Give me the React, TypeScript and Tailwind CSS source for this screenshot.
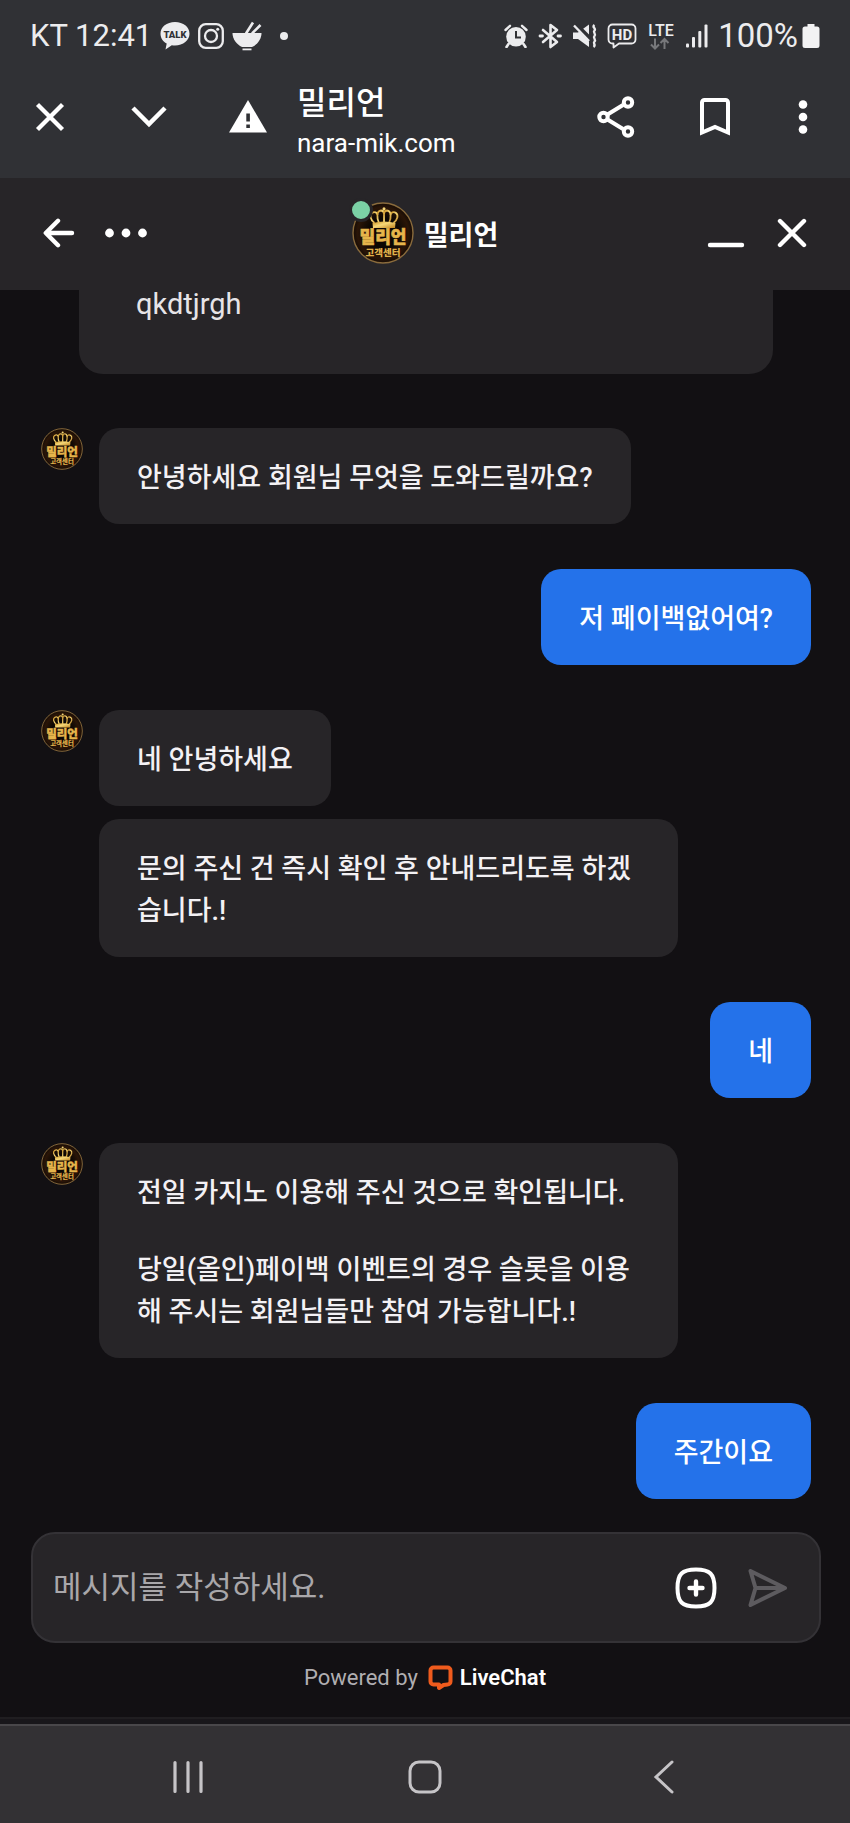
import { useState } from 'react'

interface Message {
  from: 'agent' | 'me'
  // each bubble is a list of paragraphs
  bubbles: string[][]
}

const messages: Message[] = [
  { from: 'agent', bubbles: [['안녕하세요 회원님 무엇을 도와드릴까요?']] },
  { from: 'me', bubbles: [['저 페이백없어여?']] },
  { from: 'agent', bubbles: [['네 안녕하세요'], ['문의 주신 건 즉시 확인 후 안내드리도록 하겠습니다.!']] },
  { from: 'me', bubbles: [['네']] },
  {
    from: 'agent',
    bubbles: [['전일 카지노 이용해 주신 것으로 확인됩니다.', '당일(올인)페이백 이벤트의 경우 슬롯을 이용해 주시는 회원님들만 참여 가능합니다.!']],
  },
  { from: 'me', bubbles: [['주간이요']] },
]

function Avatar({ className }: { className: string }) {
  return (
    <svg viewBox="0 0 62 62" className={className} role="img" aria-label="밀리언 고객센터">
      <defs>
        <linearGradient id="gold" x1="0" y1="0" x2="1" y2="1">
          <stop offset="0" stopColor="#c98f22" />
          <stop offset="0.45" stopColor="#f6d878" />
          <stop offset="1" stopColor="#c08420" />
        </linearGradient>
        <radialGradient id="disc" cx="0.5" cy="0.5" r="0.5">
          <stop offset="0.5" stopColor="#0c0703" />
          <stop offset="0.85" stopColor="#2a1507" />
          <stop offset="1" stopColor="#150b05" />
        </radialGradient>
      </defs>
      <circle cx="31" cy="31" r="30" fill="url(#disc)" stroke="#8a6b3c" strokeWidth="1.4" />
      <g fill="none" stroke="url(#gold)" strokeWidth="1.800" strokeLinejoin="round">
        <path d="M22.500 21C18 17.500 17.500 13 20 11C22.500 9.200 25.500 10.500 25.500 13" />
        <path d="M41.500 21C46 17.500 46.500 13 44 11C41.500 9.200 38.500 10.500 38.500 13" />
        <path d="M27 21C24.500 15.500 24.500 9 29 8.500C31.500 8.500 32 10 32 12" />
        <path d="M37 21C39.500 15.500 39.500 9 35 8.500C32.500 8.500 32 10 32 12V21" />
      </g>
      <path d="M20.500 21Q32 17.800 43.500 21L43 26H21Z" fill="url(#gold)" />
      <circle cx="32" cy="6.800" r="1.500" fill="#f6d878" />
      <text x="31" y="41" textAnchor="middle" fontSize="17" fontWeight="900" fill="#e6b54b" stroke="#e6b54b" strokeWidth="0.6" className="font-['Noto_Sans_CJK_KR',sans-serif]">
        밀리언
      </text>
      <text x="31" y="53.500" textAnchor="middle" fontSize="9.500" fontWeight="900" fill="#e0b04a" className="font-['Noto_Sans_CJK_KR',sans-serif]">
        고객센터
      </text>
    </svg>
  )
}

function StatusBar() {
  return (
    <div className="flex h-[72px] items-center justify-between pl-[30px] pr-[30px] leading-[36px] text-[#ececee]">
      <div className="flex items-center gap-2">
        <span className="whitespace-nowrap text-[31px]">KT 12:41</span>
        <svg width="30" height="28" viewBox="0 0 30 28" aria-hidden="true">
          <path d="M15 0C6.700 0 .5 5 .5 11.700c0 4.300 2.400 7.800 6.200 9.900L5.500 27.500l6.300-4.300c1 .1 2.100.2 3.200.2 8.300 0 14.500-5.100 14.500-11.700S23.300 0 15 0Z" fill="#ececee" />
          <text x="15" y="15.500" textAnchor="middle" fontSize="9.500" fontWeight="900" fill="#303135">TALK</text>
        </svg>
        <svg width="26" height="26" viewBox="0 0 26 26" fill="none" stroke="#ececee" strokeWidth="2.300" aria-hidden="true">
          <rect x="1.200" y="1.200" width="23.600" height="23.600" rx="6.500" />
          <circle cx="13" cy="13" r="6" />
          <circle cx="19.700" cy="6.300" r="1.500" fill="#ececee" stroke="none" />
        </svg>
        <svg width="30" height="30" viewBox="0 0 30 30" fill="#ececee" aria-hidden="true">
          <path d="M.5 12h29c0 6-4 11.500-9.500 14H10C4.500 23.500.5 18 .5 12Z" />
          <path d="M10.500 27.500h9v1.800h-9Z" />
          <path d="M14 12.500 21 1.500M20 12.500 28.500 4" stroke="#ececee" strokeWidth="2.600" fill="none" />
        </svg>
        <span className="ml-[10px] size-2 rounded-full bg-[#ececee]" />
      </div>

      <div className="flex items-center gap-[9px]">
        <svg width="24" height="24" viewBox="0 0 24 24" fill="none" stroke="#ececee" aria-hidden="true">
          <circle cx="12" cy="12.800" r="9.800" fill="#ececee" stroke="none" />
          <path d="M1.500 6 6 1.800M22.500 6 18 1.800" strokeWidth="2.400" strokeLinecap="round" />
          <path d="m4.500 20-2 3M19.500 20l2 3" strokeWidth="2.600" strokeLinecap="round" />
          <path d="M12 7v6.500h5" stroke="#303135" strokeWidth="2" />
        </svg>
        <svg width="26" height="26" viewBox="0 0 26 26" fill="none" stroke="#ececee" strokeWidth="2.600" strokeLinejoin="round" strokeLinecap="round" aria-hidden="true">
          <path d="m6 7 14 12-6.500 5V2L20 7 6 19" />
          <path d="M3 13h2.500M21 13h2.500" strokeWidth="2.800" />
        </svg>
        <svg width="26" height="24" viewBox="0 0 26 24" fill="#ececee" aria-hidden="true">
          <path d="M1 8.500h5l11-8v22.500l-11-8H1Z" />
          <path d="m3 0 16 16" stroke="#303135" strokeWidth="5" />
          <path d="m2 1.500 15 15.500" stroke="#ececee" strokeWidth="2.400" />
          <path d="M22.500 1c-3 2 2 3.500 0 5.500s2 3.500 0 5.500 2 3.500 0 5.500 2 3.500-1 5.500" fill="none" stroke="#ececee" strokeWidth="2.400" />
        </svg>
        <svg width="30" height="26" viewBox="0 0 30 26" fill="none" stroke="#ececee" strokeWidth="1.800" aria-hidden="true">
          <path d="M5.500 1.500h19a4 4 0 0 1 4 4v11a4 4 0 0 1-4 4H12l-5.500 4v-4h-1a4 4 0 0 1-4-4v-11a4 4 0 0 1 4-4Z" strokeLinejoin="round" />
          <text x="15" y="16.500" textAnchor="middle" fontSize="15" fontWeight="700" fill="#ececee" stroke="none">HD</text>
        </svg>
        <svg width="30" height="32" viewBox="0 0 30 32" aria-hidden="true">
          <text x="15" y="16" textAnchor="middle" fontSize="16" fontWeight="500" fill="#ececee">LTE</text>
          <path d="M9 18.500v10M5 24.500l4 4 4-4M18.500 29V19M14.500 23l4-4 4 4" fill="none" stroke="#77787b" strokeWidth="2" />
        </svg>
        <svg width="24" height="24" viewBox="0 0 24 24" fill="#ececee" aria-hidden="true">
          <rect x="1" y="19.500" width="3" height="4" rx="1" />
          <rect x="7" y="13" width="3" height="10.500" rx="1" />
          <rect x="13.300" y="7" width="3" height="16.500" rx="1" />
          <rect x="19.500" y="0.500" width="3" height="23" rx="1" />
        </svg>
        <div className="flex items-center gap-1">
          <span className="text-[33px]">100%</span>
          <svg width="18" height="24" viewBox="0 0 18 24" fill="#f2f2f3" aria-hidden="true">
            <path d="M5.500 0h7v2.500H15A2.500 2.500 0 0 1 17.500 5v16.500A2.500 2.500 0 0 1 15 24H3A2.500 2.500 0 0 1 .5 21.500V5A2.500 2.500 0 0 1 3 2.500h2.500Z" />
          </svg>
        </div>
      </div>
    </div>
  )
}

function BrowserBar() {
  return (
    <div className="flex h-[106px] items-center justify-between pb-4 pl-[35px] pr-[38px] text-white">
      <div className="flex items-center gap-[65px]">
        <button type="button" aria-label="탭 닫기">
          <svg width="30" height="30" viewBox="0 0 30 30" fill="none" stroke="currentColor" strokeWidth="4.300">
            <path d="m2.500 2.500 25 25M27.500 2.500l-25 25" />
          </svg>
        </button>
        <button type="button" aria-label="최소화">
          <svg width="38" height="24" viewBox="0 0 38 24" fill="none" stroke="currentColor" strokeWidth="4.500">
            <path d="m3 3 16 16L35 3" />
          </svg>
        </button>
        <div className="-ml-1 flex items-center gap-[30px]">
          <button type="button" aria-label="사이트 정보">
            <svg width="38" height="34" viewBox="0 0 38 34" fill="currentColor">
              <path d="M19 0 38 32.500H0Z" />
              <path d="M17.300 13.500h3.600v8h-3.600ZM17.300 24.500h3.600v3.500h-3.600Z" fill="#303135" />
            </svg>
          </button>
          <div className="pt-3">
            <p className="text-[32px] font-medium leading-[40px]">밀리언</p>
            <p className="text-[26px] leading-[40px]">nara-mik.com</p>
          </div>
        </div>
      </div>
      <div className="flex items-center gap-16">
        <button type="button" aria-label="공유">
          <svg width="40" height="42" viewBox="0 0 40 42" fill="none" stroke="currentColor" strokeWidth="4">
            <path d="M11.500 18.500 27 9M11.500 23.500 27 33" />
            <circle cx="7.500" cy="21" r="4.200" />
            <circle cx="32" cy="6.500" r="4.200" />
            <circle cx="32" cy="35.500" r="4.200" />
          </svg>
        </button>
        <button type="button" aria-label="북마크">
          <svg width="30" height="38" viewBox="0 0 30 38" fill="none" stroke="currentColor" strokeWidth="4">
            <path d="M2 34.500V4.500A2.500 2.500 0 0 1 4.500 2h21A2.500 2.500 0 0 1 28 4.500v30L15 29Z" />
          </svg>
        </button>
        <button type="button" aria-label="더보기">
          <svg width="18" height="34" viewBox="0 0 18 34" fill="currentColor">
            <circle cx="9" cy="4.500" r="4.300" />
            <circle cx="9" cy="17" r="4.300" />
            <circle cx="9" cy="29.500" r="4.300" />
          </svg>
        </button>
      </div>
    </div>
  )
}

function ChatHeader() {
  return (
    <header className="grid h-28 grid-cols-[1fr_auto_1fr] items-center bg-[#272528] pb-[2px] pl-[43px] pr-[43px] text-white">
      <div className="flex items-center gap-7">
        <button type="button" aria-label="뒤로">
          <svg width="32" height="30" viewBox="0 0 32 30" fill="none" stroke="currentColor" strokeWidth="4.400" strokeLinecap="round" strokeLinejoin="round">
            <path d="M29 15H3M15 2.800 2.800 15 15 27.200" />
          </svg>
        </button>
        <button type="button" aria-label="메뉴">
          <svg width="46" height="10" viewBox="0 0 46 10" fill="currentColor">
            <circle cx="6.500" cy="5" r="4.400" />
            <circle cx="23" cy="5" r="4.400" />
            <circle cx="39.500" cy="5" r="4.400" />
          </svg>
        </button>
      </div>
      <div className="flex items-center gap-[10px]">
        <div className="relative">
          <Avatar className="size-[62px]" />
          <span className="absolute -left-[3px] -top-1 size-6 rounded-full border-3 border-[#272528] bg-[#7bd1a5]" />
        </div>
        <h1 className="pt-[6px] text-[27px] font-bold leading-[36px]">밀리언</h1>
      </div>
      <div className="flex items-center justify-end gap-8">
        <button type="button" aria-label="창 내리기">
          <svg width="38" height="30" viewBox="0 0 38 30" fill="none" stroke="currentColor" strokeWidth="4.400" strokeLinecap="round">
            <path d="M3 27h32" />
          </svg>
        </button>
        <button type="button" aria-label="채팅 닫기">
          <svg width="30" height="30" viewBox="0 0 30 30" fill="none" stroke="currentColor" strokeWidth="4.400" strokeLinecap="round">
            <path d="m3 3 24 24M27 3 3 27" />
          </svg>
        </button>
      </div>
    </header>
  )
}

function MessageGroup({ message }: { message: Message }) {
  if (message.from === 'me') {
    return (
      <div className="flex flex-col items-end gap-[13px]">
        {message.bubbles.map((paragraphs, i) => (
          <div key={i} className="rounded-[20px] bg-[#2472ea] px-[38px] pb-[25px] pt-[29px] text-white">
            {paragraphs.map(p => <p key={p}>{p}</p>)}
          </div>
        ))}
      </div>
    )
  }

  return (
    <div className="flex items-start gap-4 pr-[133px]">
      <Avatar className="size-[42px] shrink-0" />
      <div className="flex flex-col items-start gap-[13px]">
        {message.bubbles.map((paragraphs, i) => (
          <div key={i} className="space-y-[35px] rounded-[20px] bg-[#272528] px-[38px] pb-[25px] pt-[29px] text-[#f3f1f4]">
            {paragraphs.map(p => <p key={p}>{p}</p>)}
          </div>
        ))}
      </div>
    </div>
  )
}

function Composer() {
  const [text, setText] = useState('')

  return (
    <form
      onSubmit={e => { e.preventDefault(); setText('') }}
      className="ml-[31px] mr-[29px] mt-[31px] flex h-[111px] items-center gap-7 rounded-3xl border-2 border-[#343236] bg-[#272528] pl-5 pr-[30px]"
    >
      <input
        value={text}
        onChange={e => setText(e.target.value)}
        aria-label="메시지"
        placeholder="메시지를 작성하세요."
        className="min-w-0 flex-1 bg-transparent text-[31px] leading-[44px] text-white outline-none placeholder:text-[#a9a7aa]"
      />
      <button type="button" aria-label="첨부" className="text-white">
        <svg width="42" height="42" viewBox="0 0 42 42" fill="none" stroke="currentColor" strokeWidth="4" strokeLinecap="round">
          <path d="M21 2.500c14 0 18.500 4.500 18.500 18.500S35 39.500 21 39.500 2.500 35 2.500 21 7 2.500 21 2.500Z" />
          <path d="M21 14.500v13M14.500 21h13" strokeWidth="4.400" />
        </svg>
      </button>
      <button type="submit" aria-label="보내기" className="text-[#5d5b5f]">
        <svg width="44" height="42" viewBox="0 0 44 42" fill="none" stroke="currentColor" strokeWidth="4" strokeLinecap="round" strokeLinejoin="round">
          <path d="m5.500 4 34.500 17L5.500 38l5-17ZM10.500 21H39" />
        </svg>
      </button>
    </form>
  )
}

function SystemNav() {
  return (
    <nav className="flex h-[99px] items-center justify-between border-t-2 border-[#49474a] bg-[#333134] px-[171px] pt-1 text-[#c6c4c7]">
      <button type="button" aria-label="최근 앱">
        <svg width="34" height="34" viewBox="0 0 34 34" fill="none" stroke="currentColor" strokeWidth="3.200" strokeLinecap="round">
          <path d="M4 2.500v29M17 2.500v29M30 2.500v29" />
        </svg>
      </button>
      <button type="button" aria-label="홈">
        <svg width="34" height="34" viewBox="0 0 34 34" fill="none" stroke="currentColor" strokeWidth="3">
          <rect x="2" y="2" width="30" height="30" rx="9" />
        </svg>
      </button>
      <button type="button" aria-label="뒤로 가기">
        <svg width="34" height="34" viewBox="0 0 34 34" fill="none" stroke="currentColor" strokeWidth="3" strokeLinecap="round">
          <path d="M27 2 11 17l16 15" />
        </svg>
      </button>
    </nav>
  )
}

export default function App() {
  return (
    <div className="flex min-h-screen flex-col bg-[#121013] font-[Roboto,'Noto_Sans_CJK_KR',sans-serif]">
      <div className="bg-[#303135]">
        <StatusBar />
        <BrowserBar />
      </div>
      <ChatHeader />

      <main className="flex-1 text-[27px] leading-[42px]">
        <div className="ml-[79px] mr-[77px] rounded-b-3xl bg-[#272528] px-[57px] pb-[56px] text-[#e6e4e7]">
          <p className="text-[29px] leading-[28px]">qkdtjrgh</p>
        </div>
        <div className="mt-[54px] space-y-[45px] pl-[41px] pr-[39px] font-medium">
          {messages.map((message, i) => <MessageGroup key={i} message={message} />)}
        </div>
      </main>

      <Composer />
      <footer className="flex h-[74px] items-center justify-center gap-[10px] pb-1 text-[22px] leading-[28px]">
        <span className="text-[#b0aeb1]">Powered by</span>
        <a href="#livechat" className="flex items-center gap-[7px] text-[22px] font-semibold text-white">
          <svg width="25" height="26" viewBox="0 0 25 26" fill="none" stroke="#ef5b1d" strokeWidth="4" strokeLinejoin="round" aria-hidden="true">
            <path d="M5.500 2.500h14a3 3 0 0 1 3 3v11a3 3 0 0 1-3 3l-4 .5-4.500 3v-3.500H5.500a3 3 0 0 1-3-3v-11a3 3 0 0 1 3-3Z" />
          </svg>
          LiveChat
        </a>
      </footer>
      <div className="h-[7px] border-t-2 border-[#201e21] bg-[#18161a]" />
      <SystemNav />
    </div>
  )
}
